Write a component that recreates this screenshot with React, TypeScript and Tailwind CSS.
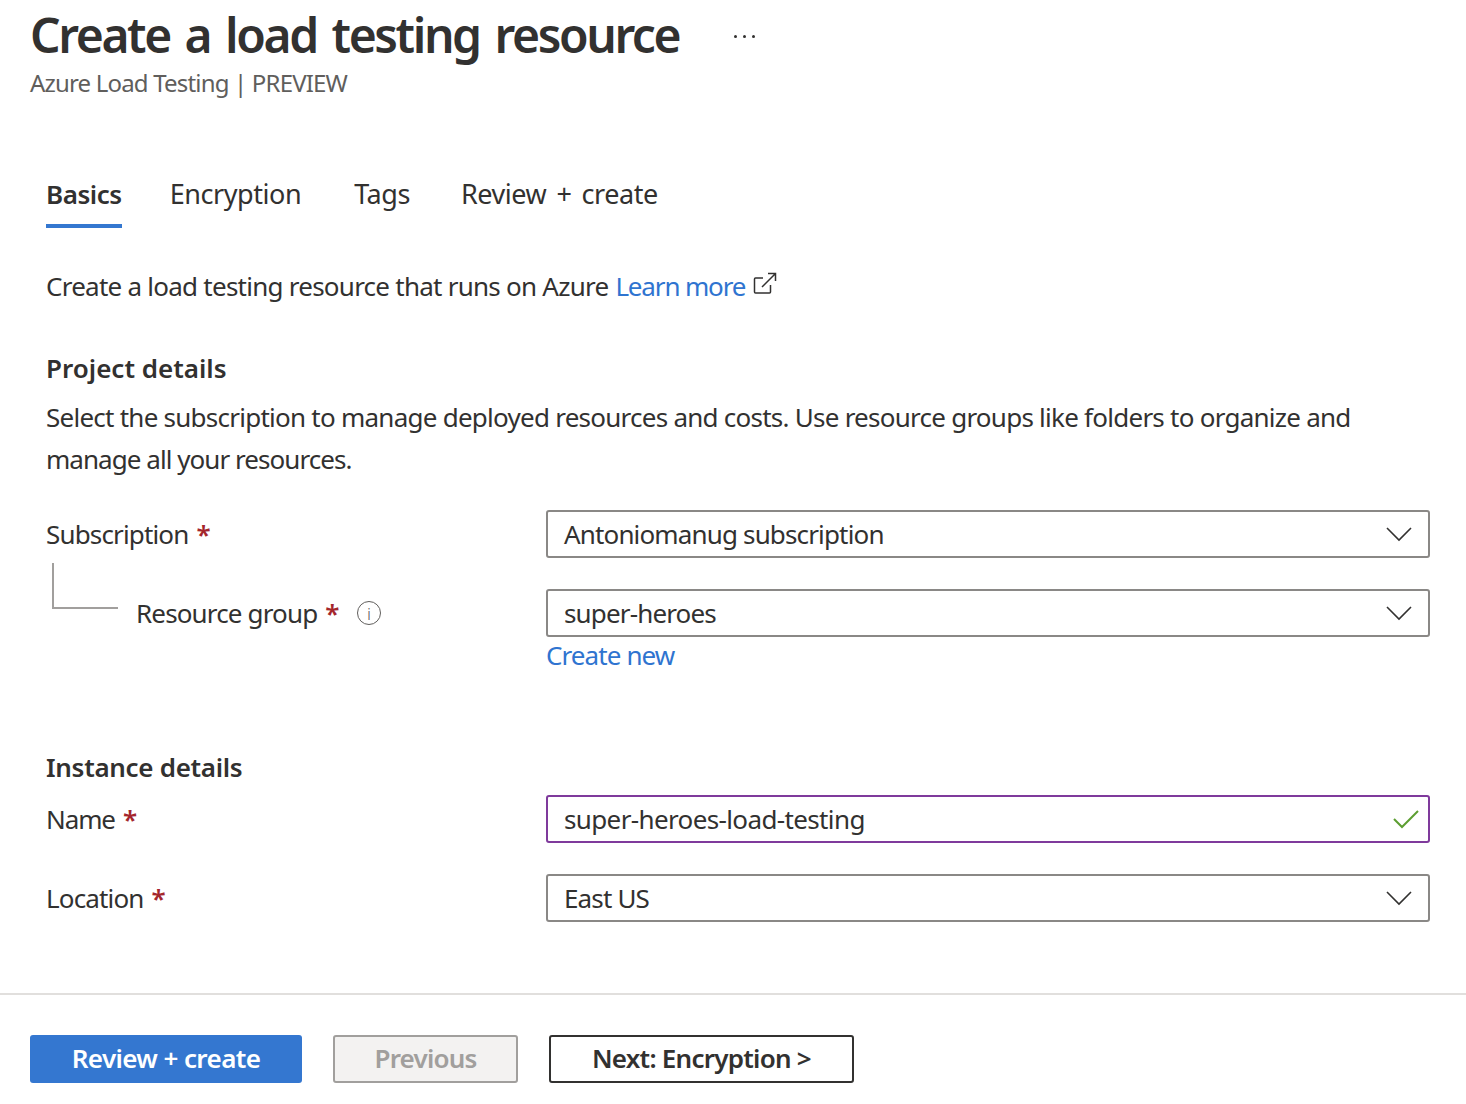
const font = "font-['Noto_Sans',sans-serif]"

function Star() {
  return <span className="ml-[8px] font-semibold text-[#a4262c]">*</span>
}

function Chevron() {
  return (
    <svg width="26" height="16" viewBox="0 0 26 16" fill="none" className="shrink-0">
      <path d="M1 2l12 12L25 2" stroke="#323130" strokeWidth="1.6" />
    </svg>
  )
}

function Select({ value }: { value: string }) {
  return (
    <div className="flex h-[48px] w-[884px] shrink-0 items-center justify-between rounded-[3px] border-2 border-[#8a8886] pl-[16px] pr-[16px]">
      <span className="tracking-[-0.85px]">{value}</span>
      <Chevron />
    </div>
  )
}

export default function App() {
  return (
    <div className={`${font} h-[1104px] w-[1466px] overflow-hidden bg-white text-[26px] leading-[42px] text-[#323130]`}>
      <header className="px-[30px] pt-[3px]">
        <div className="flex items-center">
          <h1 className="text-[48px] font-semibold leading-[64px] tracking-[-2.4px] [word-spacing:4.7px]">Create a load testing resource</h1>
          <span className="ml-[55px] mt-[2px] flex gap-[6px]">
            <i className="h-[3px] w-[3px] rounded-full bg-[#323130]" />
            <i className="h-[3px] w-[3px] rounded-full bg-[#323130]" />
            <i className="h-[3px] w-[3px] rounded-full bg-[#323130]" />
          </span>
        </div>
        <p className="text-[24px] leading-[32px] tracking-[-0.82px] text-[#605e5c]">Azure Load Testing | PREVIEW</p>
      </header>

      <nav className="mt-[64px] flex pl-[46px] text-[27px] tracking-[-0.45px]">
        <div className="h-[65px] border-b-4 border-[#3477d0] pt-[10px] text-[26px] font-semibold">Basics</div>
        <div className="ml-[48px] pt-[10px]">Encryption</div>
        <div className="ml-[53px] pt-[10px]">Tags</div>
        <div className="ml-[51px] pt-[10px] [word-spacing:3.6px]">Review + create</div>
      </nav>

      <section className="pl-[46px] tracking-[-0.75px]">
        <p className="mt-[37px] flex items-center">
          Create a load testing resource that runs on Azure
          <a className="ml-[7px] tracking-[-1.15px] text-[#2f74d0]">Learn more</a>
          <svg width="24" height="24" viewBox="0 0 24 24" fill="none" stroke="#323130" strokeWidth="1.5" className="-mt-[4px] ml-[8px]">
            <path d="M10 6H2.5a1 1 0 0 0-1 1v13a1 1 0 0 0 1 1h14a1 1 0 0 0 1-1v-7" />
            <path d="M9 15L22 2M15 1.5h7.5V9" />
          </svg>
        </p>

        <h2 className="mt-[40px] font-semibold tracking-normal">Project details</h2>
        <p className="mt-[7px]">
          Select the subscription to manage deployed resources and costs. Use resource groups like folders to organize and
          <br />
          <span className="tracking-[-0.95px]">manage all your resources.</span>
        </p>

        <div className="mt-[30px] flex items-center">
          <label className="w-[500px] shrink-0 tracking-[-0.85px]">Subscription<Star /></label>
          <Select value="Antoniomanug subscription" />
        </div>

        <div className="mt-[31px] flex items-center">
          <div className="flex w-[500px] shrink-0 items-center">
            <div className="-mt-[55px] ml-[6px] h-[46px] w-[66px] shrink-0 border-b-2 border-l-2 border-[#a19f9d]" />
            <label className="ml-[18px] whitespace-nowrap tracking-[-0.85px]">Resource group<Star /></label>
            <span className="ml-[18px] flex h-[24px] w-[24px] items-center justify-center rounded-full border-[1.5px] border-[#605e5c] text-[17px] font-light leading-none text-[#605e5c]">i</span>
          </div>
          <Select value="super-heroes" />
        </div>
        <a className="-mt-[3px] ml-[500px] block tracking-[-0.9px] text-[#2f74d0]">Create new</a>

        <h2 className="mt-[70px] font-semibold tracking-[-0.3px]">Instance details</h2>

        <div className="mt-[7px] flex items-center">
          <label className="w-[500px] shrink-0 tracking-[-1.1px]">Name<Star /></label>
          <div className="flex h-[48px] w-[884px] shrink-0 items-center justify-between rounded-[3px] border-2 border-[#7f3a9c] pl-[16px] pr-[9px]">
            <span className="tracking-[-0.63px]">super-heroes-load-testing</span>
            <svg width="26" height="20" viewBox="0 0 26 20" fill="none">
              <path d="M1 10l8 8L25 2" stroke="#5c9e31" strokeWidth="2" />
            </svg>
          </div>
        </div>

        <div className="mt-[31px] flex items-center">
          <label className="w-[500px] shrink-0 tracking-[-0.85px]">Location<Star /></label>
          <Select value="East US" />
        </div>
      </section>

      <div className="mt-[71px] h-[2px] bg-[#e1dfdd]" />

      <footer className="mt-[40px] flex gap-[31px] pl-[30px] tracking-[-0.6px]">
        <button className="h-[48px] w-[272px] rounded-[3px] bg-[#3477d0] pb-[3px] font-semibold text-white">Review + create</button>
        <button className="h-[48px] w-[185px] rounded-[3px] border-2 border-[#a19f9d] bg-[#f3f2f1] pb-[3px] font-semibold tracking-[-0.8px] text-[#a19f9d]">Previous</button>
        <button className="h-[48px] w-[305px] rounded-[3px] border-2 border-[#323130] pb-[3px] font-semibold tracking-[-0.75px]">Next: Encryption &gt;</button>
      </footer>
    </div>
  )
}
